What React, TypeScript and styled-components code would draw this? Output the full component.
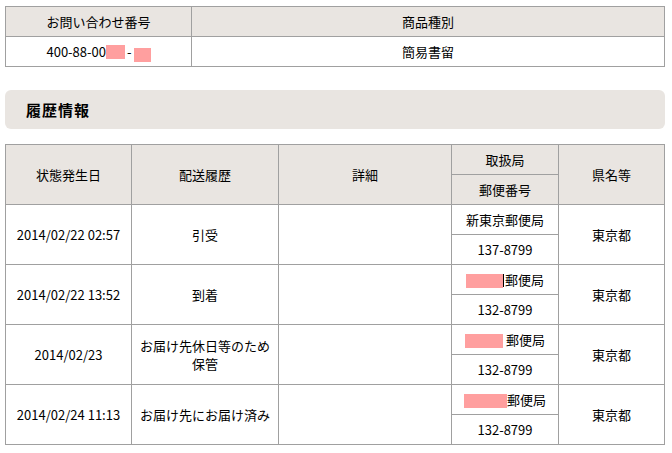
import React from "react";
import styled, { createGlobalStyle } from "styled-components";

const GlobalStyle = createGlobalStyle`
  body {
    margin: 0;
    background: #ffffff;
    font-family: "Noto Sans CJK JP", "Noto Sans", sans-serif;
    font-size: 13px;
    color: #000000;
  }
`;

const Page = styled.div`
  width: 660px;
  padding: 6px 0 0 5px;
`;

const Table = styled.table`
  width: 660px;
  border-collapse: collapse;
  table-layout: fixed;
  border: 1px solid #a0a0a0;
`;

const Row = styled.tr`
  height: 30px;
`;

const Head = styled.th`
  border: 1px solid #a0a0a0;
  background: #e9e5e1;
  font-weight: normal;
  text-align: center;
  vertical-align: middle;
  padding: 0 4px;
  line-height: 17px;
`;

const Cell = styled.td`
  border: 1px solid #a0a0a0;
  background: #ffffff;
  text-align: center;
  vertical-align: middle;
  padding: 0 4px;
  line-height: 18px;
  white-space: nowrap;
`;

const Redact = styled.span<{ $w: number; $top?: number; $mx?: string }>`
  display: inline-block;
  width: ${(p) => p.$w}px;
  height: 14px;
  background: #ff9f9f;
  vertical-align: middle;
  position: relative;
  top: ${(p) => p.$top ?? 0}px;
  margin: ${(p) => p.$mx ?? "0"};
`;

const Bar = styled.span`
  display: inline-block;
  width: 1px;
  height: 13px;
  background: #000000;
  vertical-align: middle;
  margin-right: 1px;
`;

const SectionTitle = styled.h2`
  margin: 23px 0 15px;
  height: 39px;
  box-sizing: border-box;
  padding-left: 21px;
  display: flex;
  align-items: center;
  background: #e9e5e1;
  border-radius: 6px;
  font-size: 15px;
  font-weight: bold;
  letter-spacing: 1px;
`;

interface HistoryRow {
  date: string;
  status: React.ReactNode;
  office: React.ReactNode;
  postal: string;
  pref: string;
}

const rows: HistoryRow[] = [
  {
    date: "2014/02/22 02:57",
    status: "引受",
    office: "新東京郵便局",
    postal: "137-8799",
    pref: "東京都",
  },
  {
    date: "2014/02/22 13:52",
    status: "到着",
    office: (
      <>
        <Redact $w={37} />
        <Bar />郵便局
      </>
    ),
    postal: "132-8799",
    pref: "東京都",
  },
  {
    date: "2014/02/23",
    status: (
      <>
        お届け先休日等のため
        <br />
        保管
      </>
    ),
    office: (
      <>
        <Redact $w={38} /> 郵便局
      </>
    ),
    postal: "132-8799",
    pref: "東京都",
  },
  {
    date: "2014/02/24 11:13",
    status: "お届け先にお届け済み",
    office: (
      <>
        <Redact $w={43} />郵便局
      </>
    ),
    postal: "132-8799",
    pref: "東京都",
  },
];

function App() {
  return (
    <Page>
      <GlobalStyle />
      <Table>
        <colgroup>
          <col style={{ width: 186 }} />
          <col />
        </colgroup>
        <tbody>
          <Row>
            <Head>お問い合わせ番号</Head>
            <Head>商品種別</Head>
          </Row>
          <Row>
            <Cell>
              400-88-00
              <Redact $w={19} $top={-1} $mx="0 2px 0 0" />
              -
              <Redact $w={17} $top={2} $mx="0 0 0 2px" />
            </Cell>
            <Cell>簡易書留</Cell>
          </Row>
        </tbody>
      </Table>

      <SectionTitle>履歴情報</SectionTitle>

      <Table>
        <colgroup>
          <col style={{ width: 126 }} />
          <col style={{ width: 147 }} />
          <col style={{ width: 173 }} />
          <col style={{ width: 107 }} />
          <col />
        </colgroup>
        <tbody>
          <Row>
            <Head rowSpan={2}>状態発生日</Head>
            <Head rowSpan={2}>配送履歴</Head>
            <Head rowSpan={2}>詳細</Head>
            <Head>取扱局</Head>
            <Head rowSpan={2}>県名等</Head>
          </Row>
          <Row>
            <Head>郵便番号</Head>
          </Row>
          {rows.map((r, i) => (
            <React.Fragment key={i}>
              <Row>
                <Cell rowSpan={2}>{r.date}</Cell>
                <Cell rowSpan={2}>{r.status}</Cell>
                <Cell rowSpan={2}></Cell>
                <Cell>{r.office}</Cell>
                <Cell rowSpan={2}>{r.pref}</Cell>
              </Row>
              <Row>
                <Cell>{r.postal}</Cell>
              </Row>
            </React.Fragment>
          ))}
        </tbody>
      </Table>
    </Page>
  );
}

export default App;
